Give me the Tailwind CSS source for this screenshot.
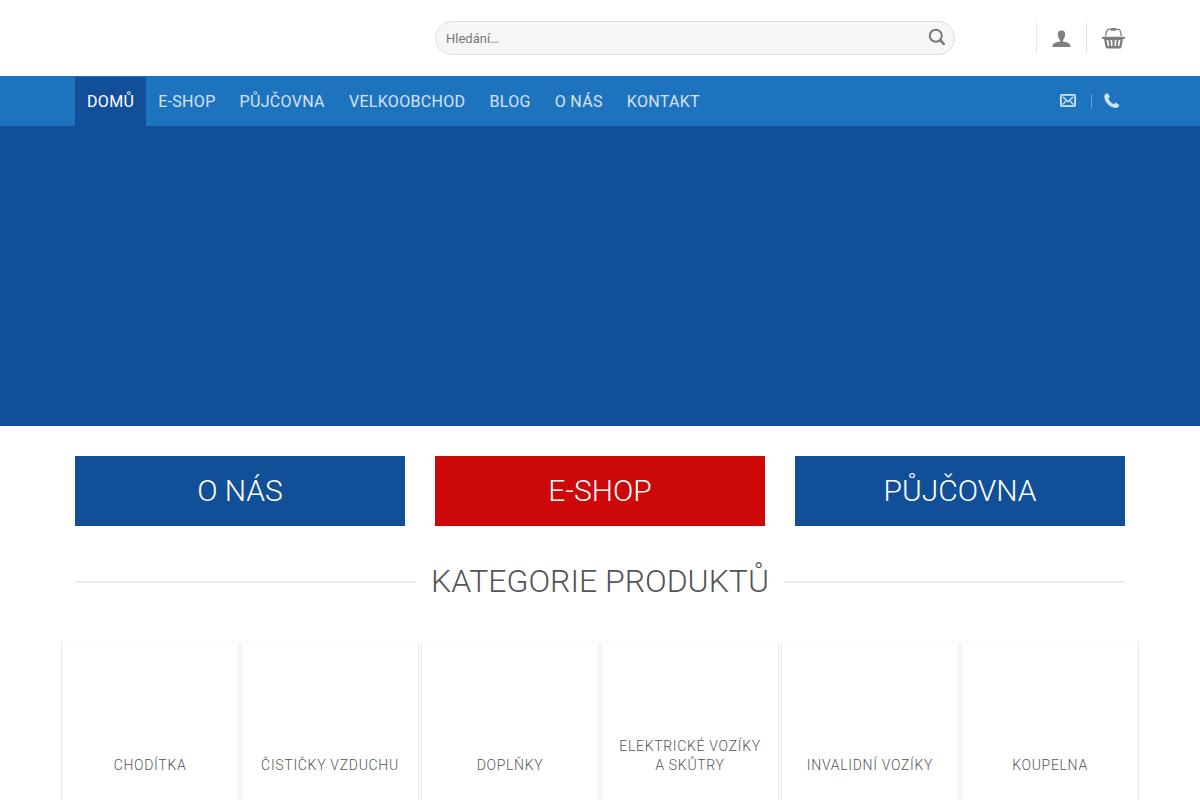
<!DOCTYPE html>
<html lang="cs">

<head>
    <meta charset="UTF-8">
    <meta name="viewport" content="width=device-width, initial-scale=1.0">
    <title>Kategorie produktů</title>
    <script src="https://cdn.jsdelivr.net/npm/@tailwindcss/browser@4"></script>
</head>

<body class="bg-white font-[Roboto,sans-serif] text-[#555555]">
    <header>
        <!-- Search and account -->
        <div class="max-w-[1080px] h-19 mx-auto px-[15px] flex items-center">
            <form class="ml-[360px] flex-1 max-w-[520px] h-[34px] flex items-center rounded-full border border-[#dddddd] bg-[#f6f6f6]" role="search">
                <input type="search" aria-label="Hledání" placeholder="Hledání…" class="flex-1 min-w-0 h-full px-[10px] bg-transparent text-[13px] outline-none placeholder:text-[#777777]">
                <button type="submit" aria-label="Hledat" class="w-[34px] h-full flex items-center justify-center pb-0.5 text-[#777777]">
                    <svg class="w-[18px] h-[18px]" viewBox="0 0 18 18" fill="none" stroke="currentColor" stroke-width="2">
                        <circle cx="7.800" cy="7.800" r="6" />
                        <path d="M12.200 12.200l3.600 3.600" stroke-width="2.500" stroke-linecap="round" />
                    </svg>
                </button>
            </form>
            <div class="ml-auto flex items-center text-[#7f7f7f]">
                <span class="w-px h-[30px] bg-[#e2e2e2]"></span>
                <a href="#" aria-label="Přihlášení" class="mx-[15px]">
                    <svg class="w-[19px] h-5" viewBox="0 0 19 20" fill="currentColor">
                        <path d="M9.500 2.500C7 2.500 5.700 4 5.800 6.300C5.900 8.800 6.800 11 8.100 12V13.500C4.600 14 1.100 15 .5 17.700V19H18.500V17.700C17.900 15 14.400 14 10.900 13.500V12C12.200 11 13.100 8.800 13.200 6.300C13.300 4 12 2.500 9.500 2.500Z" />
                    </svg>
                </a>
                <span class="w-px h-[30px] bg-[#e2e2e2]"></span>
                <a href="#" aria-label="Košík" class="ml-[15px]">
                    <svg class="w-[23px] h-[22px]" viewBox="0 0 23 22" fill="currentColor">
                        <path d="M3.500 9L5 3.400Q5.300 2.300 6.400 2.300H16.600Q17.700 2.300 18 3.400L19.500 9" fill="none" stroke="currentColor" stroke-width="1.300" />
                        <rect x="8.800" y="1" width="5.400" height="2.800" rx=".8" />
                        <path fill-rule="evenodd" d="M1 9.700Q0 9.700 0 10.900T1 12.100H2L3.500 20Q3.800 21.400 5 21.400H18Q19.200 21.400 19.500 20L21 12.100H22Q23 12.100 23 10.900T22 9.700ZM4.600 13H6.300L7.200 19H5.700ZM8.500 13H10.200L10.500 19H9ZM12.800 13H14.500L14 19H12.500ZM16.700 13H18.400L17.300 19H15.800Z" />
                    </svg>
                </a>
            </div>
        </div>

        <!-- Main menu -->
        <div class="bg-[#1e73be]">
            <div class="max-w-[1080px] h-[50px] mx-auto px-[15px] flex items-center justify-between">
                <nav class="h-full pt-px flex text-base tracking-[0.02em] text-white/80">
                    <a href="#" class="px-3 flex items-center bg-[#115099] text-white">DOMŮ</a>
                    <a href="#" class="px-3 flex items-center">E-SHOP</a>
                    <a href="#" class="px-3 flex items-center">PŮJČOVNA</a>
                    <a href="#" class="px-3 flex items-center">VELKOOBCHOD</a>
                    <a href="#" class="px-3 flex items-center">BLOG</a>
                    <a href="#" class="px-3 flex items-center">O NÁS</a>
                    <a href="#" class="px-3 flex items-center">KONTAKT</a>
                </nav>
                <div class="flex items-center text-white/80">
                    <a href="#" aria-label="E-mail">
                        <svg class="w-4 h-4" viewBox="0 0 16 16" fill="none" stroke="currentColor">
                            <rect x=".9" y="1.900" width="14.200" height="11.200" rx=".8" stroke-width="1.800" />
                            <path d="M2.800 3.800L8 8.800L13.200 3.800M2.800 11.500L6.200 7.600M13.200 11.500L9.800 7.600" stroke-width="1.300" />
                        </svg>
                    </a>
                    <span class="w-px h-[15px] ml-[15px] mr-3 bg-white/30"></span>
                    <a href="tel:" aria-label="Telefon" class="mr-[5px]">
                        <svg class="w-4 h-4" viewBox="0 0 16 16" fill="currentColor">
                            <path d="M2.400.5C1 1.100.2 2.400.3 4.100C.8 9.500 6 14.600 11.500 15C13.300 15.100 14.600 14.200 15.100 12.800C15.300 12.200 15.100 11.700 14.600 11.400L12.400 10C11.900 9.700 11.300 9.700 10.900 10.200L9.900 11.300C7.500 10.100 5.200 7.800 4.200 5.500L5.400 4.600C5.800 4.200 5.900 3.700 5.600 3.200L4.100 1C3.700.4 3 .2 2.400.5Z" />
                        </svg>
                    </a>
                </div>
            </div>
        </div>
    </header>

    <main>
        <!-- Banner -->
        <section class="h-[300px] bg-[#115099]"></section>

        <div class="max-w-[1080px] mx-auto px-[15px]">
            <div class="pt-[30px] grid grid-cols-3 gap-[30px] text-3xl font-light text-white">
                <a href="#" class="h-[70px] flex items-center justify-center bg-[#115099]">O NÁS</a>
                <a href="#" class="h-[70px] flex items-center justify-center bg-[#cc0808]">E-SHOP</a>
                <a href="#" class="h-[70px] flex items-center justify-center bg-[#115099]">PŮJČOVNA</a>
            </div>

            <div class="mt-[34px] flex items-center gap-[15px]">
                <span class="flex-1 h-[2px] bg-[#ececec]"></span>
                <h1 class="text-[32px] leading-[43px] font-light">KATEGORIE PRODUKTŮ</h1>
                <span class="flex-1 h-[2px] bg-[#ececec]"></span>
            </div>
        </div>

        <!-- Categories -->
        <div class="max-w-[1076px] mt-[39px] mx-auto grid grid-cols-6 gap-1 text-center text-sm leading-[19px] font-light tracking-wider">
            <a href="#" class="h-[177px] px-3 pb-11 flex items-end justify-center shadow-[0_1px_3px_-2px_rgba(0,0,0,0.12),0_1px_2px_rgba(0,0,0,0.24)]">CHODÍTKA</a>
            <a href="#" class="h-[177px] px-3 pb-11 flex items-end justify-center shadow-[0_1px_3px_-2px_rgba(0,0,0,0.12),0_1px_2px_rgba(0,0,0,0.24)]">ČISTIČKY VZDUCHU</a>
            <a href="#" class="h-[177px] px-3 pb-11 flex items-end justify-center shadow-[0_1px_3px_-2px_rgba(0,0,0,0.12),0_1px_2px_rgba(0,0,0,0.24)]">DOPLŇKY</a>
            <a href="#" class="h-[177px] px-3 pb-11 flex items-end justify-center shadow-[0_1px_3px_-2px_rgba(0,0,0,0.12),0_1px_2px_rgba(0,0,0,0.24)]">ELEKTRICKÉ VOZÍKY A SKŮTRY</a>
            <a href="#" class="h-[177px] px-3 pb-11 flex items-end justify-center shadow-[0_1px_3px_-2px_rgba(0,0,0,0.12),0_1px_2px_rgba(0,0,0,0.24)]">INVALIDNÍ VOZÍKY</a>
            <a href="#" class="h-[177px] px-3 pb-11 flex items-end justify-center shadow-[0_1px_3px_-2px_rgba(0,0,0,0.12),0_1px_2px_rgba(0,0,0,0.24)]">KOUPELNA</a>
        </div>
    </main>
</body>

</html>
